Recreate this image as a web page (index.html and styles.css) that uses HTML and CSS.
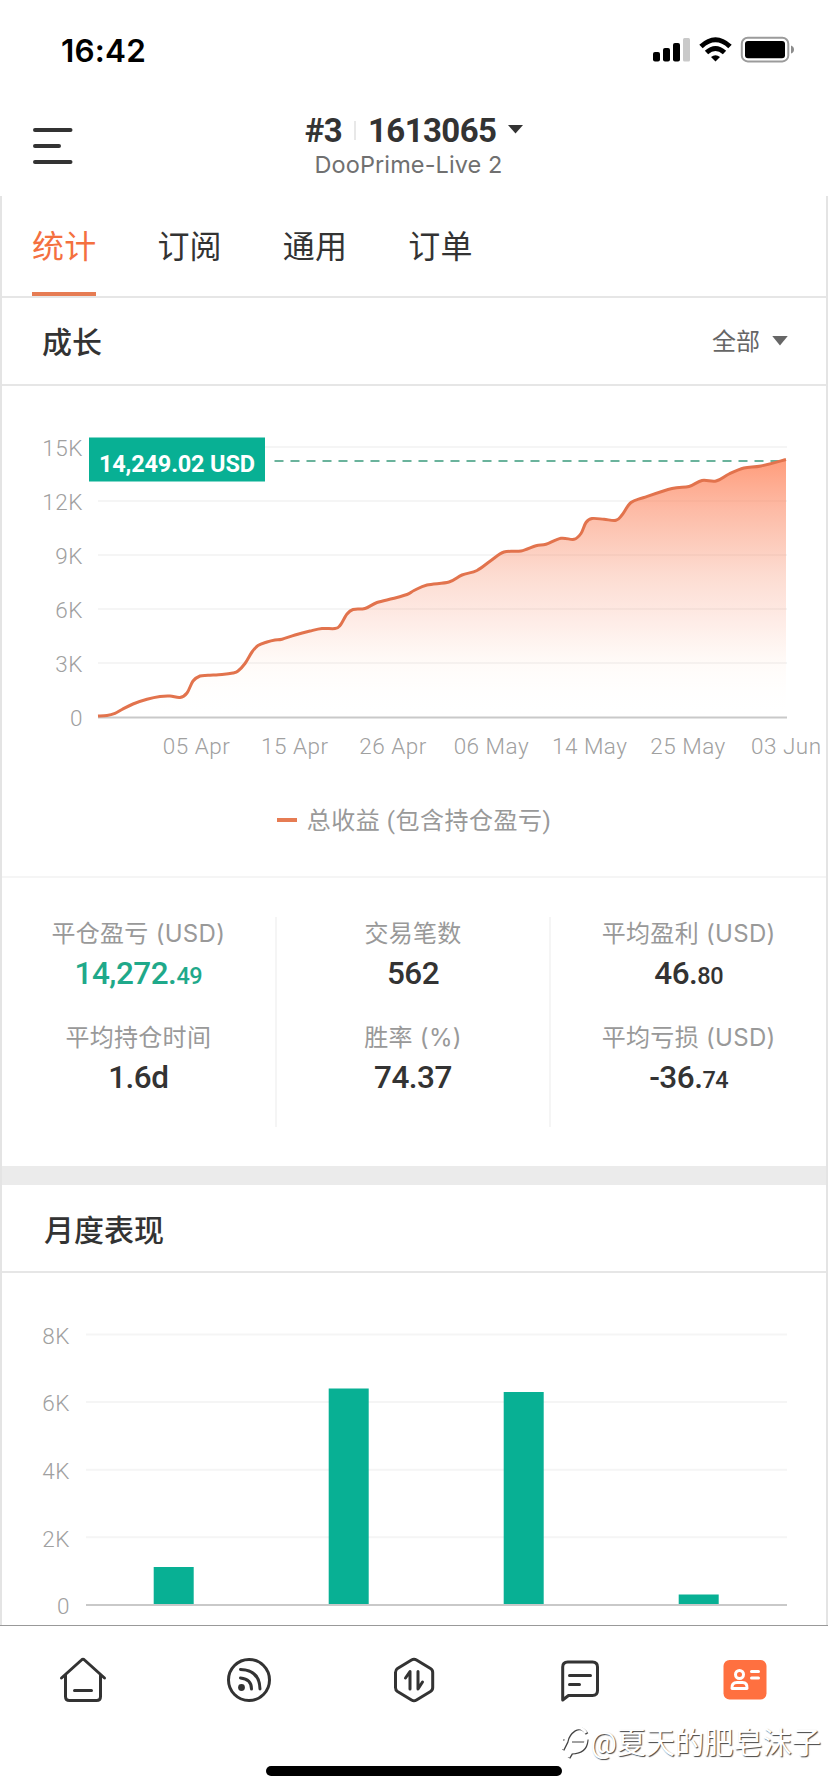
FILE: index.html
```html
<!DOCTYPE html>
<html lang="zh-CN">
  <head>
    <meta charset="UTF-8" />
    <title>DooPrime-Live 2</title>
    <link rel="stylesheet" href="styles.css">
  </head>
  <body>

    <div class="status-bar">
      <span class="time">16:42</span>
      <svg class="status-icons" width="144" height="28" viewBox="652 36 144 28">
        <rect x="653" y="52" width="7" height="9.500" rx="2" />
        <rect x="663" y="48" width="7" height="13.500" rx="2" />
        <rect x="673" y="43" width="7" height="18.500" rx="2" />
        <rect x="683" y="38" width="7" height="23.500" rx="1.500" fill="#c9c9c9" />
        <g fill="none" stroke="#000" stroke-width="5">
          <path d="M701 46.500 Q715.500 33 730 46.500" />
          <path d="M706.500 52.500 Q715.500 44.500 724.500 52.500" />
        </g>
        <path d="M711 57 Q715.500 53.500 720 57 L715.500 61.500 Z" />
        <rect x="741.800" y="37.800" width="46.500" height="23.600" rx="6" fill="none" stroke="#9b9b9b" stroke-width="2" />
        <rect x="745" y="41" width="40" height="17.200" rx="3" />
        <path d="M791 45.500 q3 1 3 4 t-3 4 z" fill="#8c8c8c" />
      </svg>
    </div>

    <header class="account">
      <svg class="menu" width="40" height="40" viewBox="0 0 40 40">
        <path d="M2 4H37.500M2 20H26M2 36H37.500" stroke="#333" stroke-width="4" stroke-linecap="round" />
      </svg>
      <div class="account-info">
        <div class="account-id">
          <span>#3</span>
          <i class="split"></i>
          <span>1613065</span>
          <svg width="15" height="9" viewBox="0 0 15 9"><path d="M0 0H15L7.500 8.500Z" fill="#333" /></svg>
        </div>
        <div class="server">DooPrime-Live 2</div>
      </div>
    </header>

    <main class="content">
      <nav class="tabs">
        <a class="tab active">统计</a>
        <a class="tab">订阅</a>
        <a class="tab">通用</a>
        <a class="tab">订单</a>
      </nav>

      <section>
        <div class="section-head">
          <h2>成长</h2>
          <div class="filter">
            全部
            <svg width="16" height="10" viewBox="0 0 17 11"><path d="M0 0H17L8.500 10.500Z" fill="#666" /></svg>
          </div>
        </div>
        <svg class="growth-chart" width="824" height="394" viewBox="2 386 824 394">
          <defs>
            <linearGradient id="fade" gradientUnits="userSpaceOnUse" x1="0" y1="459" x2="0" y2="717">
              <stop offset="0" stop-color="#ff7546" stop-opacity="0.72" />
              <stop offset="0.200" stop-color="#fc8a66" stop-opacity="0.58" />
              <stop offset="0.450" stop-color="#f78a66" stop-opacity="0.300" />
              <stop offset="0.650" stop-color="#f98c6c" stop-opacity="0.150" />
              <stop offset="0.800" stop-color="#ffb080" stop-opacity="0.050" />
              <stop offset="1" stop-color="#fff" stop-opacity="0" />
            </linearGradient>
          </defs>
          <g id="growthAxis"></g>
          <path id="growthArea" fill="url(#fade)" />
          <path d="M98 717.500H787" stroke="#c9c9c9" stroke-width="2" />
          <path d="M274.500 461H786" stroke="#3a9a7c" stroke-width="1.700" stroke-dasharray="9 7" />
          <path id="growthLine" fill="none" stroke="#e2734d" stroke-width="3" />
          <rect x="89" y="437.500" width="176" height="44" fill="#08b094" />
          <text class="badge" x="99" y="472" textLength="156">14,249.02 USD</text>
        </svg>
        <div class="legend"><i></i>总收益 (包含持仓盈亏)</div>

        <div class="stats">
          <div class="stat-col">
            <div class="stat"><label>平仓盈亏 (USD)</label><b class="green">14,272.<small>49</small></b></div>
            <div class="stat"><label>平均持仓时间</label><b>1.6d</b></div>
          </div>
          <div class="stat-col">
            <div class="stat"><label>交易笔数</label><b>562</b></div>
            <div class="stat"><label>胜率 (%)</label><b>74.37</b></div>
          </div>
          <div class="stat-col">
            <div class="stat"><label>平均盈利 (USD)</label><b>46.<small>80</small></b></div>
            <div class="stat"><label>平均亏损 (USD)</label><b>-36.<small>74</small></b></div>
          </div>
        </div>
      </section>

      <section class="monthly">
        <div class="section-head">
          <h2>月度表现</h2>
        </div>
        <svg class="month-chart" width="824" height="352" viewBox="2 1273 824 352">
          <g id="monthAxis"></g>
          <g id="monthBars" fill="#08b094"></g>
          <path d="M86 1605H787" stroke="#c9c9c9" stroke-width="2" />
        </svg>
      </section>
    </main>

    <footer class="tabbar">
      <div class="tabbar-icons">
        <svg viewBox="59 1656 48 48">
          <path d="M61.500 1678L81.500 1660Q83 1658.500 84.500 1660L104.500 1678M65.500 1675V1696.500Q65.500 1700.500 69.500 1700.500H96.500Q100.500 1700.500 100.500 1696.500V1675M74.500 1690.500H91.500" />
        </svg>
        <svg viewBox="225 1656 48 48">
          <circle cx="249" cy="1680" r="20.500" />
          <circle class="dot" cx="241.500" cy="1687.500" r="3.400" />
          <path d="M240.500 1678Q251.500 1679 251.500 1689M240.500 1669.500Q259.500 1670 260 1689" />
        </svg>
        <svg viewBox="389 1656 48 48">
          <path d="M396.500 1668.500L410.500 1660Q413 1658.500 415.500 1660L429.500 1668.500Q431.700 1669.800 431.700 1672.500V1687.500Q431.700 1690.200 429.500 1691.500L415.500 1700Q413 1701.500 410.500 1700L396.500 1691.500Q394.500 1690.200 394.500 1687.500V1672.500Q394.500 1669.800 396.500 1668.500Z" />
          <path d="M404.500 1678L409 1671.500V1689M417 1671.500V1689L421.500 1682" />
        </svg>
        <svg viewBox="555 1656 48 48">
          <path d="M561.700 1699.500V1667Q561.700 1662 566.700 1662H591.500Q596.500 1662 596.500 1667V1690.500Q596.500 1695.500 591.500 1695.500H567.500L561.700 1700M568.500 1675.500H589.500M568.500 1684.500H578.500" />
        </svg>
        <svg class="current" viewBox="721 1656 48 48">
          <rect x="723.500" y="1660" width="43" height="39.500" rx="6" />
          <circle cx="739.500" cy="1674.500" r="4" />
          <path d="M732 1688.500Q731.500 1682.500 737 1682.500H742.500Q747.500 1682.500 747 1688.500ZM751.500 1671.500H758.500M751.500 1678H758.500" />
        </svg>
      </div>
      <div class="watermark">
        <svg width="29" height="34" viewBox="0 0 29 34">
          <path d="M1 13H7M13 4Q6 9 5 16L1 24M9 7Q19 -2 25 8M10 15H25Q24 27 10 27L7 32" />
        </svg>
        <span>@夏天的肥皂沫子</span>
      </div>
      <div class="home-indicator"></div>
    </footer>

    <script>
const growth = [
  [98, 716], [107, 715.5], [115, 713.3], [122, 709.5], [133, 704], [147, 699.3], [160, 696.5], [170, 696],
  [180, 697.5], [187, 693], [193, 681], [200, 676], [208, 675.3], [222, 674.5], [233, 673], [238, 671],
  [245, 663.5], [252, 652], [258, 645.5], [267, 642], [275, 640], [282, 639.3], [295, 635], [310, 631],
  [322, 628.5], [335, 628.5], [340, 625.5], [347, 614], [353, 609.5], [365, 608.5], [377, 602.5], [393, 598.5],
  [407, 594.5], [414, 590.5], [427, 585], [449, 582], [462, 575], [477, 570.5], [491, 560.5], [504, 552],
  [521, 551], [536, 545.7], [546, 544.3], [561, 538.3], [574, 539.3], [581, 533.5], [586, 522.5], [592, 518.5],
  [604, 519.3], [616, 520.3], [622, 515], [631, 502.5], [644, 497.5], [672, 488.5], [689, 486.5], [702, 480.5],
  [716, 481], [729, 474], [744, 468], [761, 466], [786, 459.5]
];

// smooth curve through all the points
function curve(pts) {
  let d = `M${pts[0]}`;
  for (let i = 0; i < pts.length - 1; i++) {
    const a = pts[i - 1] || pts[i];
    const b = pts[i];
    const c = pts[i + 1];
    const e = pts[i + 2] || c;
    d += `C${b[0] + (c[0] - a[0]) / 6},${b[1] + (c[1] - a[1]) / 6} ${c[0] - (e[0] - b[0]) / 6},${c[1] - (e[1] - b[1]) / 6} ${c}`;
  }
  return d;
}

const line = curve(growth);
document.getElementById("growthLine").setAttribute("d", line);
document.getElementById("growthArea").setAttribute("d", line + "V717H98Z");

function yAxis(labels, top, step, left, right) {
  return labels.map((label, i) => {
    const y = top + i * step;
    const grid = label === "0" ? "" : `<path class="grid" d="M${left} ${y}H787" />`;
    return `${grid}<text class="axis end" x="${right}" y="${y + 9.2}">${label}</text>`;
  }).join("");
}

const days = ["05 Apr", "15 Apr", "26 Apr", "06 May", "14 May", "25 May", "03 Jun"];
document.getElementById("growthAxis").innerHTML =
  yAxis(["15K", "12K", "9K", "6K", "3K", "0"], 447, 54, 98, 83) +
  days.map((day, i) => `<text class="axis middle" x="${196.5 + i * 98.3}" y="754">${day}</text>`).join("");

const months = [["Mar", 1567], ["Apr", 1388.5], ["May", 1392], ["Jun", 1594.5]];
document.getElementById("monthAxis").innerHTML =
  yAxis(["8K", "6K", "4K", "2K", "0"], 1334.5, 67.6, 86, 70) +
  months.map((m, i) => `<text class="axis middle" x="${174 + i * 175}" y="1640.5">${m[0]}</text>`).join("");
document.getElementById("monthBars").innerHTML =
  months.map((m, i) => `<rect x="${153.7 + i * 175}" y="${m[1]}" width="40" height="${1604 - m[1]}" />`).join("");
    </script>

  </body>
</html>
```
FILE: styles.css
```css
* {
  box-sizing: border-box;
}
body {
  margin: 0;
  width: 828px;
  height: 1792px;
  overflow: hidden;
  display: flex;
  flex-direction: column;
  background-color: #fff;
  color: #333;
  font-family: Roboto, "Noto Sans CJK SC", sans-serif;
}
svg {
  display: block;
}

.status-bar {
  height: 100px;
  padding: 0 32px 0 61px;
  display: flex;
  align-items: center;
  justify-content: space-between;
}
.time {
  font-family: Inter, sans-serif;
  font-size: 31.5px;
  font-weight: 600;
  letter-spacing: 0.2px;
  color: #000;
}

.account {
  height: 96px;
  display: grid;
  grid-template-columns: 72px 1fr 72px;
  padding: 0 32px;
}
.menu {
  margin: 26px 0 0 1px;
}
.account-info {
  padding-top: 10px;
  display: flex;
  flex-direction: column;
  align-items: center;
}
.account-id {
  display: flex;
  align-items: center;
  height: 40px;
  font-size: 33px;
  font-weight: 700;
  letter-spacing: -0.6px;
}
.account-id .split {
  width: 2px;
  height: 19px;
  margin: 0 12px 0 12px;
  background-color: #e8e8e8;
}
.account-id svg {
  margin: -2px 0 0 12px;
}
.server {
  margin-right: 11px;
  font-family: Inter, sans-serif;
  font-size: 23.5px;
  line-height: 30px;
  letter-spacing: 0.1px;
  color: #707070;
}

.content {
  height: 1429px;
  overflow: hidden;
  border-left: 2px solid #e4e4e4;
  border-right: 2px solid #e4e4e4;
}
.tabs {
  height: 102px;
  padding-left: 30px;
  display: flex;
  gap: 61px;
  border-bottom: 2px solid #e6e6e6;
}
.tab {
  height: 100px;
  padding-top: 3px;
  font-size: 32px;
  line-height: 97px;
  letter-spacing: 0.2px;
}
.tab.active {
  color: #f4703f;
  border-bottom: 4px solid #e67c53;
}

.section-head {
  height: 88px;
  padding: 0 38px 3px 40px;
  display: flex;
  align-items: center;
  justify-content: space-between;
  border-bottom: 2px solid #e6e6e6;
}
h2 {
  margin: 0;
  font-size: 30px;
  font-weight: 500;
}
.filter {
  display: flex;
  align-items: center;
  gap: 12px;
  font-size: 24px;
  color: #666;
}
.filter svg {
  margin-top: 3px;
}

.grid {
  stroke: #f5f5f5;
  stroke-width: 2;
}
.axis {
  font-size: 22.5px;
  font-weight: 300;
  letter-spacing: 0.5px;
  fill: #a0a0a0;
}
.axis.end {
  text-anchor: end;
}
.axis.middle {
  text-anchor: middle;
}
.badge {
  font-size: 23.5px;
  font-weight: 700;
  fill: #fff;
}

.legend {
  height: 98px;
  padding-bottom: 19px;
  display: flex;
  align-items: center;
  justify-content: center;
  font-size: 24px;
  letter-spacing: 0.5px;
  color: #999;
  border-bottom: 2px solid #f5f5f5;
}
.legend i {
  width: 20px;
  height: 4px;
  margin: 2px 10px 0 0;
  background-color: #e67c53;
}

.stats {
  height: 288px;
  padding: 39px 0;
  display: grid;
  grid-template-columns: 1fr 1fr 1fr;
}
.stat-col {
  border-right: 2px solid #f5f5f5;
}
.stat-col:last-child {
  border-right: none;
}
.stat {
  height: 104px;
  display: flex;
  flex-direction: column;
  align-items: center;
}
.stat label {
  height: 34px;
  font-family: Inter, "Noto Sans CJK SC", sans-serif;
  font-size: 24px;
  line-height: 34px;
  letter-spacing: 0.3px;
  color: #999;
}
.stat b {
  height: 46px;
  font-size: 31.5px;
  font-weight: 500;
  line-height: 46px;
  letter-spacing: -0.5px;
}
.stat small {
  font-size: 23.5px;
}
.stat .green {
  color: #1fa98a;
}

.monthly {
  border-top: 19px solid #ebebeb;
}
.monthly .section-head {
  padding: 0 42px 1px;
}

.tabbar {
  position: relative;
  height: 167px;
  border-top: 1px solid #999;
}
.tabbar-icons {
  display: flex;
  justify-content: space-between;
  padding: 30px 59px 0;
}
.tabbar-icons svg {
  width: 48px;
  height: 48px;
  fill: none;
  stroke: #333;
  stroke-width: 3;
  stroke-linecap: round;
  stroke-linejoin: round;
}
.tabbar-icons .dot {
  fill: #333;
  stroke: none;
}
.tabbar-icons .current {
  stroke: #fff;
}
.tabbar-icons .current rect {
  fill: #ff7040;
  stroke: none;
}
/* embossed signature over the bar */
.watermark {
  position: absolute;
  right: 7px;
  top: 92px;
  display: flex;
  align-items: center;
  height: 44px;
  font-size: 29.2px;
  font-weight: 400;
  color: #fff;
  text-shadow: 1px 1px 1px #444;
}
.watermark svg {
  margin-top: 4px;
  fill: none;
  stroke: #fff;
  stroke-width: 3;
  filter: drop-shadow(1px 1px 0.5px #444);
}
.home-indicator {
  position: absolute;
  left: 266px;
  bottom: 16px;
  width: 296px;
  height: 10px;
  border-radius: 5px;
  background-color: #000;
}
```
